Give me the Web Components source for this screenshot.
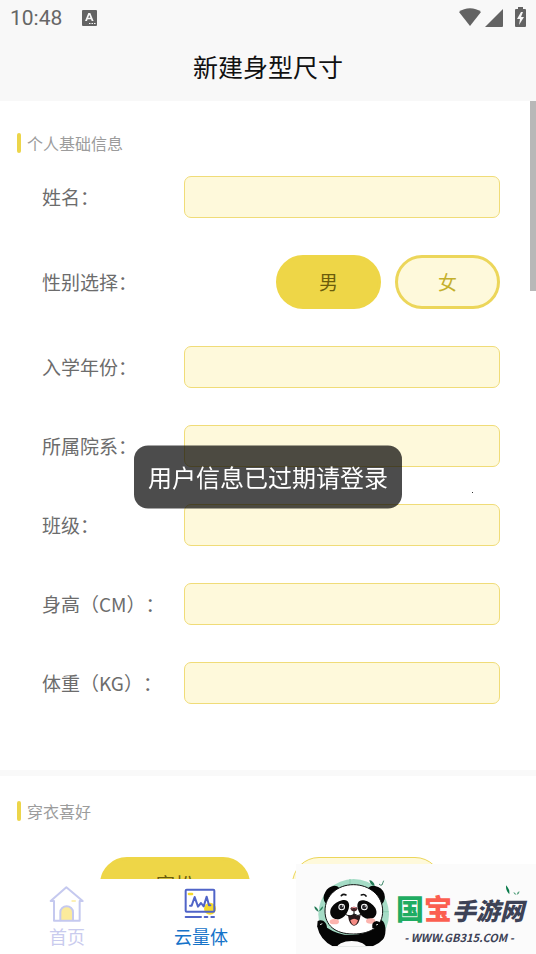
<!DOCTYPE html>
<html lang="zh-CN">
<head>
<meta charset="utf-8">
<meta name="viewport" content="width=device-width, initial-scale=1">
<title>新建身型尺寸</title>
<style>
    body {
        margin: 0;
        font-family: "Noto Sans CJK SC", sans-serif;
        color: #6c6c6c;
        background: #fff;
        text-spacing-trim: space-all;
    }
</style>
</head>
<body>
<body-app>
    <status-bar slot="top" time="10:48"></status-bar>
    <page-title slot="top">新建身型尺寸</page-title>

    <form-section heading="个人基础信息">
        <size-field label="姓名："></size-field>
        <choice-field label="性别选择：">
            <choice-button selected>男</choice-button>
            <choice-button>女</choice-button>
        </choice-field>
        <size-field label="入学年份："></size-field>
        <size-field label="所属院系："></size-field>
        <size-field label="班级："></size-field>
        <size-field label="身高（CM）："></size-field>
        <size-field label="体重（KG）："></size-field>
    </form-section>
    <form-section heading="穿衣喜好" class="next">
        <style-choices>
            <choice-button selected wide>宽松</choice-button>
            <choice-button wide thin>修身</choice-button>
        </style-choices>
    </form-section>

    <tab-bar slot="bottom">
        <tab-item href="#home">
            <svg slot="icon" viewBox="57 46 108 111" width="36" height="37" fill="none" stroke="#c5c9ef" stroke-width="6" stroke-linecap="round" stroke-linejoin="round">
                <path d="M91 153v-25a19 19 0 0 1 38 0v25z" fill="#fbeb9c" stroke="none"/>
                <path d="M62 94l47-41 49 41h-9v59H72V94z"/>
                <path d="M91 152v-24a19 18 0 0 1 38 0v24"/>
                <path d="M126 94h10" stroke="#fbeb9c" stroke-width="4"/>
            </svg>
            首页
        </tab-item>
        <tab-item href="#cloud" active>
            <svg slot="icon" viewBox="459 46 108 111" width="36" height="37" fill="none" stroke="#5064c8" stroke-width="6" stroke-linecap="round" stroke-linejoin="round">
                <circle cx="540" cy="117" r="18" fill="#f6da2c" stroke="none"/>
                <path d="M477 73h9" stroke="#f6da2c" stroke-width="8"/>
                <rect x="467" y="60" width="86" height="66" rx="3"/>
                <path d="M480 108h5l9-26 10 29 9-11 8 10 9-29 7 26h4" stroke-width="6"/>
                <path d="M467 142h46M524 142h8M544 142h8"/>
            </svg>
            云量体
        </tab-item>
    </tab-bar>

    <toast-message slot="overlay">用户信息已过期请登录</toast-message>
    <site-badge slot="overlay"></site-badge>
</body-app>

<script>
// every element renders its markup into an open shadow root
class BaseElement extends HTMLElement {
    constructor() {
        super()
        this.attachShadow({ mode: 'open' })
    }

    connectedCallback() {
        this.shadowRoot.innerHTML = this.render()
    }
}

class BodyApp extends BaseElement {
    render() {
        return `
        <style>
            :host {
                display: flex;
                flex-direction: column;
                height: 100vh;
            }
            header {
                background: #f8f8f8;
            }
            main {
                position: relative;
                flex: 1;
                min-height: 0;
                overflow: hidden;
            }
            .thumb {
                position: absolute;
                top: 0;
                right: 0;
                width: 6px;
                height: 190px;
                background: #b8b8b8;
            }
            .speck {
                position: absolute;
                top: 391px;
                right: 63px;
                width: 1px;
                height: 1px;
                background: #333;
            }
        </style>
        <header><slot name="top"></slot></header>
        <main>
            <slot></slot>
            <div class="thumb"></div>
            <div class="speck"></div>
        </main>
        <slot name="bottom"></slot>
        <slot name="overlay"></slot>
        `
    }
}

class StatusBar extends BaseElement {
    render() {
        return `
        <style>
            :host {
                display: flex;
                align-items: center;
                height: 36px;
                padding: 0 10px;
                font: 400 21px/36px Roboto, sans-serif;
                color: #666;
            }
            svg {
                fill: #636363;
            }
            .app {
                margin-left: 20px;
            }
            .system {
                margin-left: auto;
            }
        </style>
        <time>${this.getAttribute('time')}</time>
        <svg class="app" width="15" height="16" viewBox="0 0 15 16">
            <rect width="15" height="16" rx="1"/>
            <path d="M3 11L6.300 3h2L11.600 11H9.700L9 9.300H5.600L5 11zM6.200 7.800h2.200L7.300 5z" fill="#f8f8f8"/>
            <path d="M7 13.500h1.500M9.500 13.500H11M12 13.500h1.500" stroke="#f8f8f8"/>
        </svg>
        <svg class="system" width="67" height="22" viewBox="0 0 67 22">
            <path d="M0 5C6 0 16 0 22 5L11 19z"/>
            <path d="M44 2v17a1 1 0 0 1-1 1H26z"/>
            <path d="M59 0h5v2h2q1 0 1 1v16q0 1-1 1h-9q-1 0-1-1V3q0-1 1-1h2z"/>
            <path d="M62 5l-4 7h3l-1 6 5-8h-3l2-5z" fill="#f8f8f8"/>
        </svg>
        `
    }
}

class PageTitle extends BaseElement {
    render() {
        return `
        <style>
            :host {
                display: block;
                padding-bottom: 5px;
            }
            h1 {
                margin: 0;
                font-size: 25px;
                font-weight: 400;
                line-height: 60px;
                text-align: center;
                color: #111;
            }
        </style>
        <h1><slot></slot></h1>
        `
    }
}

class FormSection extends BaseElement {
    render() {
        return `
        <style>
            :host {
                display: block;
                padding: 32px 36px 66px 17px;
            }
            :host(.next) {
                padding-top: 25px;
                border-top: 6px solid #f9f9f9;
            }
            h2 {
                display: flex;
                align-items: center;
                gap: 6px;
                margin: 0;
                font-size: 16px;
                font-weight: 400;
                line-height: 20px;
                color: #9c9c9c;
            }
            h2::before {
                content: "";
                width: 4px;
                height: 20px;
                border-radius: 2px;
                background: #ecd54a;
            }
            .rows {
                display: flex;
                flex-direction: column;
                gap: 37px;
                padding: 23px 0 0 25px;
            }
        </style>
        <section>
            <h2>${this.getAttribute('heading')}</h2>
            <div class="rows"><slot></slot></div>
        </section>
        `
    }
}

class SizeField extends BaseElement {
    render() {
        return `
        <style>
            :host {
                display: grid;
                grid-template-columns: 142px 1fr;
                align-items: center;
                font-size: 19px;
            }
            label {
                padding-bottom: 2px;
            }
            input {
                box-sizing: border-box;
                width: 100%;
                height: 42px;
                margin: 0;
                padding: 0 10px;
                border: 1px solid #f0dc78;
                border-radius: 7px;
                background: #fef9db;
                font: inherit;
                color: inherit;
                outline: none;
            }
        </style>
        <label for="value">${this.getAttribute('label')}</label>
        <input id="value" type="text">
        `
    }
}

class ChoiceField extends BaseElement {
    render() {
        return `
        <style>
            :host {
                display: flex;
                align-items: center;
                justify-content: space-between;
                font-size: 19px;
            }
            #name {
                padding-bottom: 2px;
            }
            .choices {
                display: flex;
                gap: 14px;
            }
        </style>
        <span id="name">${this.getAttribute('label')}</span>
        <div class="choices" role="group" aria-labelledby="name"><slot></slot></div>
        `
    }
}

class ChoiceButton extends BaseElement {
    render() {
        return `
        <style>
            :host {
                display: block;
                width: 105px;
            }
            :host([wide]) {
                width: 150px;
            }
            button {
                box-sizing: border-box;
                width: 100%;
                height: 54px;
                padding: 0 0 2px;
                border: 3px solid #ecd65a;
                border-radius: 27px;
                background: #fef9db;
                font: inherit;
                font-size: 19px;
                color: #c4b02c;
            }
            :host([thin]) button {
                border-width: 1px;
            }
            :host([selected]) button {
                border-color: #eed647;
                background: #eed647;
                color: #6b5c0c;
            }
        </style>
        <button type="button" aria-pressed="${this.hasAttribute('selected')}"><slot></slot></button>
        `
    }
}

class StyleChoices extends BaseElement {
    render() {
        return `
        <style>
            :host {
                display: flex;
                gap: 42px;
                padding: 13px 0 0 58px;
            }
        </style>
        <slot></slot>
        `
    }
}

class TabBar extends BaseElement {
    render() {
        return `
        <style>
            :host {
                display: block;
                background: #fff;
            }
            nav {
                display: grid;
                grid-template-columns: repeat(4, 1fr);
            }
        </style>
        <nav><slot></slot></nav>
        `
    }
}

class TabItem extends BaseElement {
    render() {
        return `
        <style>
            :host {
                display: block;
            }
            a {
                display: flex;
                flex-direction: column;
                align-items: center;
                padding: 6px 0 4px;
                font-size: 18px;
                line-height: 28px;
                color: #c9cbee;
                text-decoration: none;
            }
            :host([active]) a {
                color: #1673c9;
            }
            ::slotted(svg) {
                display: block;
            }
        </style>
        <a href="${this.getAttribute('href')}">
            <slot name="icon"></slot>
            <span><slot></slot></span>
        </a>
        `
    }
}

class ToastMessage extends BaseElement {
    render() {
        return `
        <style>
            :host {
                position: fixed;
                top: 50%;
                left: 50%;
                transform: translate(-50%, -50%);
                padding: 0 14px 2px;
                border-radius: 14px;
                background: rgba(0, 0, 0, 0.7);
                font-size: 24px;
                line-height: 61px;
                white-space: nowrap;
                color: #fff;
            }
        </style>
        <div role="status"><slot></slot></div>
        `
    }
}

class SiteBadge extends BaseElement {
    render() {
        return `
        <style>
            :host {
                position: fixed;
                right: 0;
                bottom: 0;
                display: flex;
                box-sizing: border-box;
                width: 240px;
                height: 90px;
                padding: 1px 0 0 4px;
                background: #fbfbfb;
            }
            .words {
                position: relative;
                flex: 1;
                padding-top: 24px;
                font-weight: 900;
                white-space: nowrap;
                color: #3d4256;
            }
            .name {
                display: flex;
                align-items: baseline;
                font-size: 24px;
                line-height: 38px;
            }
            .name span {
                font-style: italic;
            }
            b {
                font-size: 28px;
                font-weight: 900;
            }
            .green {
                color: #1fac62;
            }
            .red {
                color: #fb5f50;
            }
            .url {
                padding-right: 14px;
                font-size: 11px;
                font-style: italic;
                font-weight: 700;
                line-height: 16px;
                text-align: center;
            }
            .leaves {
                position: absolute;
                top: 18px;
                left: 108px;
            }
        </style>
        <svg width="96" height="89" viewBox="0 0 288 267">
            <defs><clipPath id="round"><path d="M0 0h288v180l-20 10q-12 40-50 54H98q-38-20-46-58L0 170z"/></clipPath></defs>
            <g clip-path="url(#round)">
                <circle cx="161" cy="148" r="106" fill="#a5dcc6"/>
                <path d="M150 42v30M98 62l12 18M244 84l-20 14M266 140h-26" stroke="#90d0b5" stroke-width="4"/>
                <path d="M53 168c14-8 28 4 28 20q36 24 76 22t64-25c-2-22 16-28 28-16 12 16 10 50-8 66-14 14-30 18-40 20H98q-38-18-48-56z" fill="#050505"/>
                <ellipse cx="155" cy="252" rx="46" ry="24" fill="#fbfbfb"/>
            </g>
            <path d="M77 115q-12-16-1-34 8-17 27-19 12 1 15 8zM204 72q6-12 21-9 21 4 28 23 5 18-7 31z" fill="#050505"/>
            <path d="M160 59c48 0 88 32 88 79 0 44-32 69-88 69s-85-27-85-69c0-47 38-79 85-79z" fill="#fff" stroke="#111" stroke-width="3"/>
            <path d="M126 106c18-5 25 10 20 25-5 18-20 34-38 32-17-4-22-22-13-36 7-11 19-18 31-21zM192 106c-18-3-23 11-18 27 5 17 18 30 36 29 18-2 24-18 16-33-8-12-20-20-34-23z" fill="#080808"/>
            <circle cx="125" cy="126" r="10" fill="#fff"/>
            <circle cx="125" cy="126" r="7" fill="#29282c"/>
            <circle cx="128" cy="123" r="2" fill="#fff"/>
            <circle cx="193" cy="126" r="10" fill="#fff"/>
            <circle cx="193" cy="126" r="7" fill="#29282c"/>
            <circle cx="196" cy="123" r="2" fill="#fff"/>
            <path d="M124 92q6-6 14-2M184 90q9-4 14 3" fill="none" stroke="#111" stroke-width="5" stroke-linecap="round"/>
            <path d="M151 131q1-6 11-6t11 6q-3 8-11 8t-11-8z" fill="#49272b"/>
            <path d="M155 129q7-4 14 0" fill="none" stroke="#ec8c91" stroke-width="3"/>
            <path d="M144 151q10 4 18-4 10 8 20 3-4 30-20 32-15-2-18-31z" fill="#281719"/>
            <path d="M151 166q11-9 23 0-4 14-12 14-7 0-11-14z" fill="#f48b84"/>
            <path d="M162 138v10M138 149q13 8 24-2 11 9 23 1" fill="none" stroke="#111" stroke-width="3" stroke-linecap="round"/>
            <ellipse cx="103" cy="170" rx="14" ry="8" fill="#fcb4ae"/>
            <ellipse cx="212" cy="168" rx="14" ry="8" fill="#fcb4ae"/>
            <path d="M217 190q-4-19 13-22 15 2 18 20z" fill="#050505"/>
            <path d="M60 179l7-3M228 180l6-2" stroke="#ddd" stroke-width="3"/>
            <path d="M208 45q15 4 16 18-14-3-16-18zM43 124q10 3 13 17-13-6-13-17zM57 139q3-10 12-15 0 11-12 15z" fill="#267b58"/>
            <path d="M237 57q4 5 9 3l5-13" fill="none" stroke="#448d6e" stroke-width="3"/>
        </svg>
        <div class="words">
            <div class="name"><b class="green">国</b><b class="red">宝</b><span>手游网</span></div>
            <div class="url">- WWW.GB315.COM -</div>
            <svg class="leaves" width="18" height="16" viewBox="0 0 54 48">
                <path d="M6 7q12 12 10 27Q5 24 6 7z" fill="#087a49"/>
                <path d="M28 27q7 2 9 9-8-2-9-9zM38 35q1-7 8-11 1 9-8 11z" fill="#5aa381"/>
            </svg>
        </div>
        `
    }
}

customElements.define('body-app', BodyApp)
customElements.define('status-bar', StatusBar)
customElements.define('page-title', PageTitle)
customElements.define('form-section', FormSection)
customElements.define('size-field', SizeField)
customElements.define('choice-field', ChoiceField)
customElements.define('choice-button', ChoiceButton)
customElements.define('style-choices', StyleChoices)
customElements.define('tab-bar', TabBar)
customElements.define('tab-item', TabItem)
customElements.define('toast-message', ToastMessage)
customElements.define('site-badge', SiteBadge)
</script>
</body>
</html>
